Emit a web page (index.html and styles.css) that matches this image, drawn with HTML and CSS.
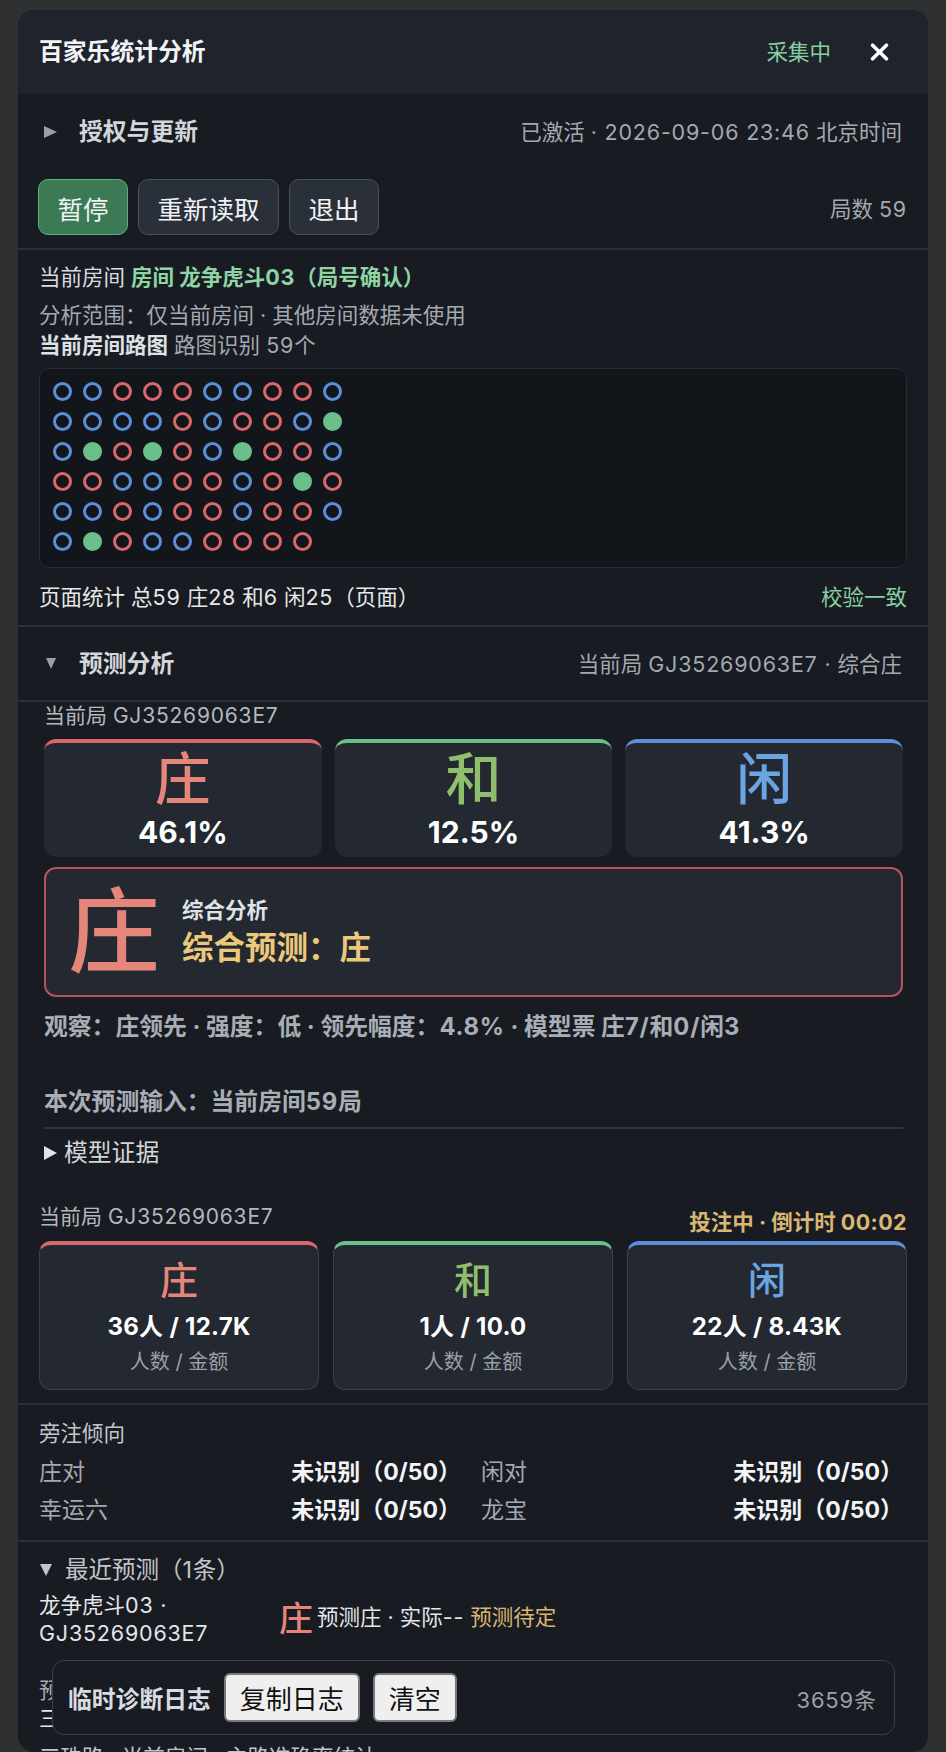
FILE: index.html
```html
<!DOCTYPE html>
<html lang="zh-CN">
<head>
<meta charset="utf-8">
<title>百家乐统计分析</title>
<link rel="stylesheet" href="styles.css">
</head>
<body>
<div class="page">
  <div class="panel">
    <header class="hdr">
      <div class="title">百家乐统计分析</div>
      <div class="hdr-right">
        <span class="live">采集中</span>
        <span class="close"><svg width="19" height="18" viewBox="0 0 19 18"><path d="M2.6 2.2 L16.4 15.8 M16.4 2.2 L2.6 15.8" stroke="#ffffff" stroke-width="3.6" stroke-linecap="round"/></svg></span>
      </div>
    </header>

    <div class="body">
      <section class="sec auth">
        <div class="sec-head">
          <span class="tri-box"><span class="tri-right"></span></span>
          <span class="sec-title">授权与更新</span>
          <span class="sec-meta">已激活 <span class="lat">· 2026-09-06 23:46</span> 北京时间</span>
        </div>
        <div class="ctrl">
          <div class="btns">
            <span class="btn btn-green">暂停</span>
            <span class="btn">重新读取</span>
            <span class="btn">退出</span>
          </div>
          <span class="muted">局数 <span class="lat">59</span></span>
        </div>
      </section>

      <section class="sec room">
        <div class="line l-room">当前房间 <span class="green-b">房间 龙争虎斗<span class="lat">03</span>（局号确认）</span></div>
        <div class="line muted l-scope">分析范围：仅当前房间 · 其他房间数据未使用</div>
        <div class="line"><span class="semi">当前房间路图</span> <span class="muted">路图识别 <span class="lat">59</span>个</span></div>
        <div class="road">
          <span class="d b"></span><span class="d b"></span><span class="d b"></span><span class="d r"></span><span class="d b"></span><span class="d b"></span>
          <span class="d b"></span><span class="d b"></span><span class="d g"></span><span class="d r"></span><span class="d b"></span><span class="d g"></span>
          <span class="d r"></span><span class="d b"></span><span class="d r"></span><span class="d b"></span><span class="d r"></span><span class="d r"></span>
          <span class="d r"></span><span class="d b"></span><span class="d g"></span><span class="d b"></span><span class="d b"></span><span class="d b"></span>
          <span class="d r"></span><span class="d r"></span><span class="d r"></span><span class="d r"></span><span class="d r"></span><span class="d b"></span>
          <span class="d b"></span><span class="d b"></span><span class="d b"></span><span class="d r"></span><span class="d r"></span><span class="d r"></span>
          <span class="d b"></span><span class="d r"></span><span class="d g"></span><span class="d b"></span><span class="d b"></span><span class="d r"></span>
          <span class="d r"></span><span class="d r"></span><span class="d r"></span><span class="d r"></span><span class="d r"></span><span class="d r"></span>
          <span class="d r"></span><span class="d b"></span><span class="d r"></span><span class="d g"></span><span class="d r"></span><span class="d r"></span>
          <span class="d b"></span><span class="d g"></span><span class="d b"></span><span class="d r"></span><span class="d b"></span>
        </div>
        <div class="line stats">
          <span class="light">页面统计 总<span class="lat">59</span> 庄<span class="lat">28</span> 和<span class="lat">6</span> 闲<span class="lat">25</span>（页面）</span>
          <span class="green">校验一致</span>
        </div>
      </section>

      <section class="sec pred-head">
        <span class="tri-box"><span class="tri-down"></span></span>
        <span class="sec-title">预测分析</span>
        <span class="sec-meta">当前局 <span class="lat">GJ35269063E7 ·</span> 综合庄</span>
      </section>

      <section class="pred">
        <div class="cur">当前局 <span class="lat">GJ35269063E7</span></div>
        <div class="prob-grid">
          <div class="pcard c-red"><div class="pch red">庄</div><div class="pct">46.1%</div></div>
          <div class="pcard c-green"><div class="pch green-c">和</div><div class="pct">12.5%</div></div>
          <div class="pcard c-blue"><div class="pch blue">闲</div><div class="pct">41.3%</div></div>
        </div>
        <div class="summary">
          <div class="sum-ch">庄</div>
          <div class="sum-text">
            <div class="sum-sub">综合分析</div>
            <div class="sum-main">综合预测：庄</div>
          </div>
        </div>
        <div class="obs">观察：庄领先 · 强度：低 · 领先幅度：<span class="lat">4.8%</span> · 模型票 庄<span class="lat">7/</span>和<span class="lat">0/</span>闲<span class="lat">3</span></div>
        <div class="input">本次预测输入：当前房间<span class="lat">59</span>局</div>
        <div class="divider"></div>
        <div class="evidence"><span class="tri-ev"></span><span>模型证据</span></div>
      </section>

      <section class="sec bets">
        <div class="bets-head">
          <span class="cur2">当前局 <span class="lat">GJ35269063E7</span></span>
          <span class="status">投注中 · 倒计时 <span class="lat">00:02</span></span>
        </div>
        <div class="bet-grid">
          <div class="bcard c-red"><div class="bch red">庄</div><div class="bval">36人 / 12.7K</div><div class="blab">人数 / 金额</div></div>
          <div class="bcard c-green"><div class="bch green-c">和</div><div class="bval">1人 / 10.0</div><div class="blab">人数 / 金额</div></div>
          <div class="bcard c-blue"><div class="bch blue">闲</div><div class="bval">22人 / 8.43K</div><div class="blab">人数 / 金额</div></div>
        </div>
      </section>

      <section class="sec side">
        <div class="side-title">旁注倾向</div>
        <div class="side-grid">
          <div class="side-item"><span class="muted">庄对</span><span class="val">未识别（0/50）</span></div>
          <div class="side-item"><span class="muted">闲对</span><span class="val">未识别（0/50）</span></div>
          <div class="side-item"><span class="muted">幸运六</span><span class="val">未识别（0/50）</span></div>
          <div class="side-item"><span class="muted">龙宝</span><span class="val">未识别（0/50）</span></div>
        </div>
      </section>

      <section class="recent">
        <div class="recent-title"><span class="tri-down2"></span><span>最近预测（<span class="lat">1</span>条）</span></div>
        <div class="recent-row">
          <div class="recent-id">龙争虎斗<span class="lat">03 · GJ35269063E7</span></div>
          <div class="recent-ch">庄</div>
          <div class="recent-txt">预测庄 · 实际<span class="lat">--</span> <span class="gold">预测待定</span></div>
        </div>
        <div class="hidden-a muted">预测统计</div>
        <div class="hidden-b">三路对比</div>
        <div class="hidden-c">三珠路 · 当前房间 · 主路准确率统计</div>
      </section>
    </div>

    <div class="diag">
      <span class="diag-title">临时诊断日志</span>
      <span class="lbtn">复制日志</span>
      <span class="lbtn">清空</span>
      <span class="diag-count"><span class="lat">3659</span>条</span>
    </div>
  </div>
</div>
</body>
</html>
```

FILE: styles.css
```css
* { box-sizing: border-box; }
html, body { margin: 0; padding: 0; }
body {
  background: #2f3031;
  font-family: "Inter", "Noto Sans CJK SC", sans-serif;
  color: #e3e6ea;
  font-size: 21.5px;
}
.lat { letter-spacing: 0.8px; }
.page { padding: 10px 18px 0; }
.panel {
  position: relative;
  height: 1742px;
  background: #181b21;
  border-radius: 16px;
  overflow: hidden;
  display: flex;
  flex-direction: column;
}

/* header */
.hdr {
  flex: none;
  height: 84px;
  background: #1f242c;
  display: flex;
  align-items: center;
  justify-content: space-between;
  padding: 0 39px 0 21px;
}
.title { font-size: 23.8px; font-weight: 700; color: #f1f3f5; line-height: 30px; }
.hdr-right { display: flex; align-items: center; gap: 39px; }
.live { color: #88cfa0; font-size: 21.5px; line-height: 30px; }
.close { display: flex; width: 19px; height: 18px; }

.body { flex: 1; overflow: hidden; }

.sec { border-bottom: 2px solid #2a3039; }
.muted { color: #a3a9b1; }
.light { color: #e6e8eb; }
.green { color: #88cfa0; }
.green-b { color: #8fd4a4; font-weight: 700; }
.semi { color: #dde0e4; font-weight: 700; }
.gold { color: #d8b772; }
.red { color: #e6867b; }
.green-c { color: #8fbf6e; }
.blue { color: #6ba4e2; }

/* section headers */
.sec-head, .pred-head {
  display: flex;
  align-items: center;
  padding: 0 26px;
  gap: 22px;
}
.sec-head { height: 76px; }
.pred-head { height: 75px; }
.tri-box { width: 13px; display: flex; justify-content: center; }
.tri-right {
  width: 0; height: 0;
  border-left: 13px solid #9aa0a8;
  border-top: 6px solid transparent;
  border-bottom: 6px solid transparent;
}
.tri-down {
  width: 0; height: 0;
  border-top: 11px solid #9aa0a8;
  border-left: 5.5px solid transparent;
  border-right: 5.5px solid transparent;
}
.sec-title { font-size: 23.8px; font-weight: 700; color: #d2d6db; line-height: 30px; }
.sec-meta { margin-left: auto; color: #a3a9b1; font-size: 21.5px; line-height: 30px; }

/* controls */
.auth { padding-bottom: 13px; }
.ctrl {
  margin-top: 9px;
  display: flex;
  align-items: center;
  justify-content: space-between;
  padding: 0 21px 0 20px;
}
.btns { display: flex; gap: 10px; }
.btn {
  height: 56px;
  padding: 0 18.5px;
  display: flex;
  align-items: center;
  border: 1.5px solid #4a515c;
  background: #2a303a;
  border-radius: 10px;
  font-size: 25.5px;
  color: #f0f2f4;
}
.btn-green { background: #3b7a55; border-color: #5fae7c; }

/* room */
.room { padding: 12px 21px 13px; }
.line { line-height: 30px; }
.l-room { color: #d8dce0; margin-bottom: 8px; }
.road {
  margin-top: 8px;
  height: 200px;
  border: 1px solid #262c34;
  border-radius: 10px;
  background: #12151a;
  padding: 13px;
  display: grid;
  grid-auto-flow: column;
  grid-template-rows: repeat(6, 19px);
  grid-auto-columns: 19px;
  gap: 11px;
}
.d { width: 19px; height: 19px; border-radius: 50%; border: 3.5px solid; }
.d.b { border-color: #5b8fd9; }
.d.r { border-color: #d9676b; }
.d.g { border-color: #6bbf8a; background: #6bbf8a; }
.stats { margin-top: 14px; display: flex; justify-content: space-between; }

/* prediction */
.pred { padding: 0 25px 0 26px; }
.cur { line-height: 28px; font-size: 21px; color: #b3b8bf; }
.prob-grid {
  margin-top: 9px;
  display: grid;
  grid-template-columns: repeat(3, 1fr);
  gap: 13px;
}
.pcard {
  height: 118px;
  background: #232831;
  border-radius: 12px;
  border-top-width: 4px;
  border-top-style: solid;
  text-align: center;
  padding-top: 5px;
}
.c-red { border-top-color: #d9676b; }
.c-green { border-top-color: #6bbf8a; }
.c-blue { border-top-color: #5b8fd9; }
.pch { font-size: 56px; line-height: 62px; font-weight: 500; }
.pct { margin-top: 5px; font-size: 30px; line-height: 35px; font-weight: 700; color: #ffffff; }

.summary {
  margin-top: 10px;
  height: 130px;
  border: 2px solid #b5555a;
  border-radius: 12px;
  background: #232831;
  display: flex;
  align-items: center;
  padding-left: 22px;
  gap: 22px;
}
.sum-ch { font-size: 92px; line-height: 100px; color: #e6867b; font-weight: 500; }
.sum-sub { font-size: 21.5px; line-height: 28px; font-weight: 700; color: #e0e3e6; }
.sum-main { font-size: 31.5px; line-height: 40px; font-weight: 700; color: #ecc97a; margin-top: 4px; }

.obs { margin-top: 16px; line-height: 28px; font-size: 23.8px; font-weight: 700; color: #a8aeb6; }
.input { margin-top: 47px; line-height: 28px; font-size: 23.8px; font-weight: 700; color: #a8aeb6; }
.divider { margin-top: 11px; height: 2px; background: #2e343d; }
.evidence {
  margin-top: 10px;
  display: flex;
  align-items: center;
  gap: 7px;
  line-height: 28px;
  font-size: 23.8px;
  color: #d2d6db;
}
.tri-ev {
  width: 0; height: 0;
  border-left: 13px solid #e0e3e6;
  border-top: 7.5px solid transparent;
  border-bottom: 7.5px solid transparent;
}

/* bets */
.bets { padding: 36px 21px 13px; }
.bets-head { display: flex; justify-content: space-between; align-items: flex-start; }
.cur2 { line-height: 28px; font-size: 21px; color: #b3b8bf; }
.status { margin-top: 5px; line-height: 28px; font-size: 21.5px; font-weight: 700; color: #d8b772; }
.status .lat { letter-spacing: 0.4px; }
.bet-grid {
  margin-top: 5px;
  display: grid;
  grid-template-columns: repeat(3, 1fr);
  gap: 14px;
}
.bcard {
  height: 149px;
  background: #232831;
  border: 1.5px solid #3a404a;
  border-top-width: 4px;
  border-radius: 12px;
  text-align: center;
  padding-top: 12px;
}
.bcard.c-red { border-top-color: #d9676b; }
.bcard.c-green { border-top-color: #6bbf8a; }
.bcard.c-blue { border-top-color: #5b8fd9; }
.bch { font-size: 38px; line-height: 46px; font-weight: 500; }
.bval { margin-top: 9px; font-size: 24px; line-height: 30px; font-weight: 700; color: #ffffff; letter-spacing: 0.3px; }
.blab { margin-top: 6px; font-size: 20px; line-height: 28px; color: #9aa0a8; }

/* side bets */
.side { padding: 14px 25px 11px 21px; }
.side-title { line-height: 28px; color: #c2c6cc; }
.side-grid {
  margin-top: 6px;
  display: grid;
  grid-template-columns: 1fr 1fr;
  column-gap: 20px;
  font-size: 23px;
}
.side-item { display: flex; justify-content: space-between; line-height: 38px; }
.val { font-weight: 700; color: #f3f4f6; }

/* recent */
.recent { padding: 12px 21px 0; }
.recent-title {
  display: flex;
  align-items: center;
  gap: 13px;
  line-height: 32px;
  font-size: 23.5px;
  color: #c2c6cc;
  padding-left: 1px;
}
.tri-down2 {
  width: 0; height: 0;
  border-top: 12px solid #c2c6cc;
  border-left: 6px solid transparent;
  border-right: 6px solid transparent;
}
.recent-row { margin-top: 5px; display: flex; align-items: flex-start; }
.recent-id { width: 226px; line-height: 28px; color: #e3e6ea; }
.recent-ch { margin-left: 14px; margin-top: 8px; font-size: 34px; line-height: 40px; color: #e6867b; font-weight: 500; }
.recent-txt { margin-left: 4px; margin-top: 12px; line-height: 28px; color: #e3e6ea; }
.hidden-a { margin-top: 29px; line-height: 28px; }
.hidden-b { line-height: 28px; color: #e3e6ea; }
.hidden-c { margin-top: 11px; line-height: 28px; color: #c2c6cc; }

/* diagnostic bar */
.diag {
  position: absolute;
  left: 34px;
  right: 33px;
  bottom: 17px;
  height: 75px;
  background: #181b21;
  border: 1.5px solid #3a404a;
  border-radius: 12px;
  display: flex;
  align-items: center;
  padding: 0 18px 0 15px;
  gap: 13px;
}
.diag-title { font-size: 23.8px; font-weight: 700; color: #d8dce0; }
.lbtn {
  height: 49px;
  padding: 0 14px;
  display: flex;
  align-items: center;
  background: #efefef;
  border: 2px solid #7a7a7a;
  border-radius: 6px;
  font-size: 26px;
  color: #111111;
  font-family: "Noto Sans CJK SC", sans-serif;
}
.diag-count { margin-left: auto; font-size: 22px; color: #9aa0a8; }
```
